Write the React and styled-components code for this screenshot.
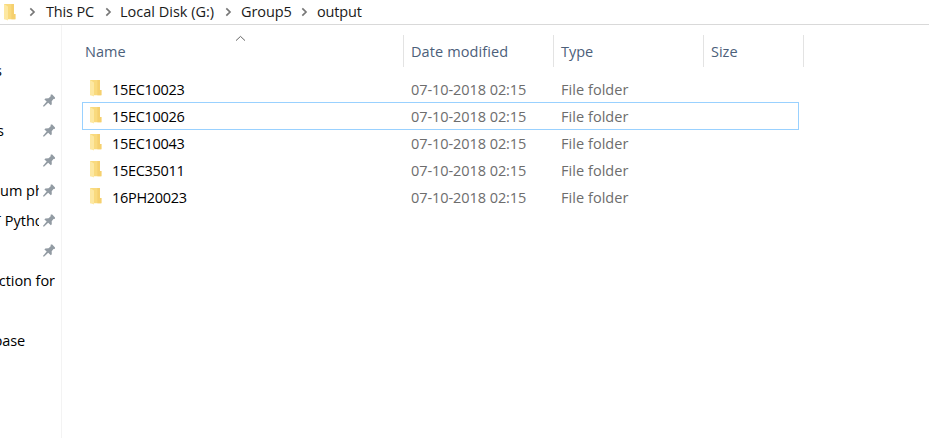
import React from 'react';
import styled, { createGlobalStyle } from 'styled-components';

const GlobalStyle = createGlobalStyle`
  * { box-sizing: border-box; }
  html, body { margin: 0; padding: 0; overflow: hidden; background: #fff; }
  body { font-family: "Open Sans", "Noto Sans", sans-serif; font-size: 14.5px; color: #000; }
  svg { display: block; flex: none; }
`;

const Window = styled.div`
  display: flex;
  flex-direction: column;
  width: 929px;
  height: 438px;
  overflow: hidden;
  background: #fff;
`;

const AddressBar = styled.nav`
  display: flex;
  align-items: center;
  flex: none;
  gap: 13px;
  height: 25px;
  padding-left: 3px;
  border-bottom: 1px solid #d9d9d9;
`;

const Crumbs = styled.div`
  display: flex;
  align-items: center;
`;

const Crumb = styled.span`
  flex: none;
  width: ${(p) => p.$width}px;
  line-height: 24px;
  letter-spacing: ${(p) => p.$tracking || 0}px;
  white-space: pre;
  color: #1a1a1a;
`;

const CrumbArrow = styled.svg`
  margin-right: ${(p) => p.$after}px;
`;

const Body = styled.div`
  display: flex;
  flex: 1;
  min-height: 0;
`;

const Sidebar = styled.aside`
  flex: none;
  width: 62px;
  padding-top: 31px;
  border-right: 1px solid #f3f3f3;
`;

const NavItem = styled.div`
  display: flex;
  align-items: center;
  height: 30px;
`;

const NavLabel = styled.div`
  display: flex;
  justify-content: ${(p) => (p.$clipEnd ? 'flex-start' : 'flex-end')};
  flex: none;
  width: ${(p) => p.$width}px;
  overflow: hidden;
  line-height: 22px;
  text-indent: ${(p) => p.$indent || 0}px;
  letter-spacing: ${(p) => p.$tracking || 0}px;
  white-space: pre;
`;

const PinSlot = styled.div`
  flex: none;
  margin-left: ${(p) => p.$gap}px;
`;

const Listing = styled.main`
  flex: 1;
  padding: 10px 0 0 20px;
`;

const HeaderRow = styled.div`
  display: flex;
  height: 32px;
  margin-bottom: 9px;
`;

const HeaderCell = styled.div`
  position: relative;
  width: ${(p) => p.$width}px;
  padding-left: ${(p) => p.$pad}px;
  border-right: 1px solid #e3e3e3;
  line-height: 33px;
  letter-spacing: ${(p) => p.$tracking || 0}px;
  color: #4c607a;
`;

const SortMark = styled.svg`
  position: absolute;
  top: 0;
  left: 153px;
`;

const FileRow = styled.div`
  position: relative;
  display: flex;
  align-items: center;
  width: 717px;
  height: 27px;
`;

const FocusRing = styled.div`
  position: absolute;
  inset: -1px 0 0 0;
  border: 1px solid #99d1ff;
`;

const FileName = styled.div`
  display: flex;
  align-items: center;
  gap: 10px;
  width: 329px;
  padding-left: 7px;
  letter-spacing: -0.3px;

  svg { margin-bottom: 3px; }
`;

const Meta = styled.div`
  width: ${(p) => p.$width}px;
  letter-spacing: ${(p) => p.$tracking || 0}px;
  color: #6d6d6d;
`;

function FolderIcon() {
  return (
    <svg width="13" height="18" viewBox="0 0 13 18">
      <path d="M1 1h10v10h1.4v5.2H1z" fill="#f9da7e" />
      <path d="M8.4 1H11v10h1.4v5.2H8.4z" fill="#f5d06f" />
      <path d="M1 1l4 2.6v13.9L1 15.8z" fill="#fde8a2" />
    </svg>
  );
}

function PinIcon() {
  return (
    <svg width="14" height="14" viewBox="0 0 14 14">
      <path
        d="M8.8.6h1.4L13 3.6v1.2l-1.5.3-1.8 2.2.1 3-1 .9-2.6-2.4-4.3 4L.9 12.1l3.8-4.5-2.3-2.2.9-1 3.2-.1L8.5 2.4z"
        fill="#929ba3"
      />
    </svg>
  );
}

function Arrow({ after }) {
  return (
    <CrumbArrow $after={after} width="7" height="10" viewBox="0 0 7 10">
      <path d="M1.3 1.3 5 5 1.3 8.7" fill="none" stroke="#777" strokeWidth="1.7" />
    </CrumbArrow>
  );
}

const crumbs = [
  { text: 'This PC', width: 59, after: 10, tracking: -0.15 },
  { text: 'Local Disk (G:)', width: 105, after: 8, tracking: 0 },
  { text: 'Group5', width: 60, after: 9, tracking: -0.1 },
  { text: 'output', width: 60, after: 9, tracking: -0.15 },
];

const navItems = [
  { label: 's', width: 2 },
  { pin: true },
  { label: 's', width: 4, pin: true },
  { pin: true },
  { label: 'um ph', width: 39, pin: true, clipEnd: true },
  { label: 'T Pytho', width: 39, pin: true, clipEnd: true, indent: -7 },
  { pin: true },
  { label: 'ction for', width: 55, tracking: -0.05 },
  {},
  { label: 'base', width: 25, tracking: -0.1 },
];

const files = ['15EC10023', '15EC10026', '15EC10043', '15EC35011', '16PH20023'];

export default function App() {
  return (
    <>
      <GlobalStyle />
      <Window>
        <AddressBar>
          <FolderIcon />
          <Crumbs>
            {crumbs.map((c) => (
              <React.Fragment key={c.text}>
                <Arrow after={c.after} />
                <Crumb $width={c.width} $tracking={c.tracking}>{c.text}</Crumb>
              </React.Fragment>
            ))}
          </Crumbs>
        </AddressBar>
        <Body>
          <Sidebar>
            {navItems.map((n, i) => (
              <NavItem key={i}>
                <NavLabel
                  $width={n.width || 0}
                  $clipEnd={n.clipEnd}
                  $tracking={n.tracking}
                  $indent={n.indent}
                >
                  {n.label}
                </NavLabel>
                {n.pin && (
                  <PinSlot $gap={42 - (n.width || 0)}>
                    <PinIcon />
                  </PinSlot>
                )}
              </NavItem>
            ))}
          </Sidebar>
          <Listing>
            <HeaderRow>
              <HeaderCell $width={322} $pad={3}>
                Name
                <SortMark width="11" height="7" viewBox="0 0 11 7">
                  <path d="M1 5.6 5.5 1.4 10 5.6" fill="none" stroke="#666" strokeWidth="1" />
                </SortMark>
              </HeaderCell>
              <HeaderCell $width={150} $pad={7} $tracking={0.1}>Date modified</HeaderCell>
              <HeaderCell $width={150} $pad={7}>Type</HeaderCell>
              <HeaderCell $width={100} $pad={7}>Size</HeaderCell>
            </HeaderRow>
            {files.map((name, i) => (
              <FileRow key={name}>
                <FileName>
                  <FolderIcon />
                  {name}
                </FileName>
                <Meta $width={150} $tracking={-0.07}>07-10-2018 02:15</Meta>
                <Meta $width={150} $tracking={0.05}>File folder</Meta>
                {i === 1 && <FocusRing />}
              </FileRow>
            ))}
          </Listing>
        </Body>
      </Window>
    </>
  );
}
